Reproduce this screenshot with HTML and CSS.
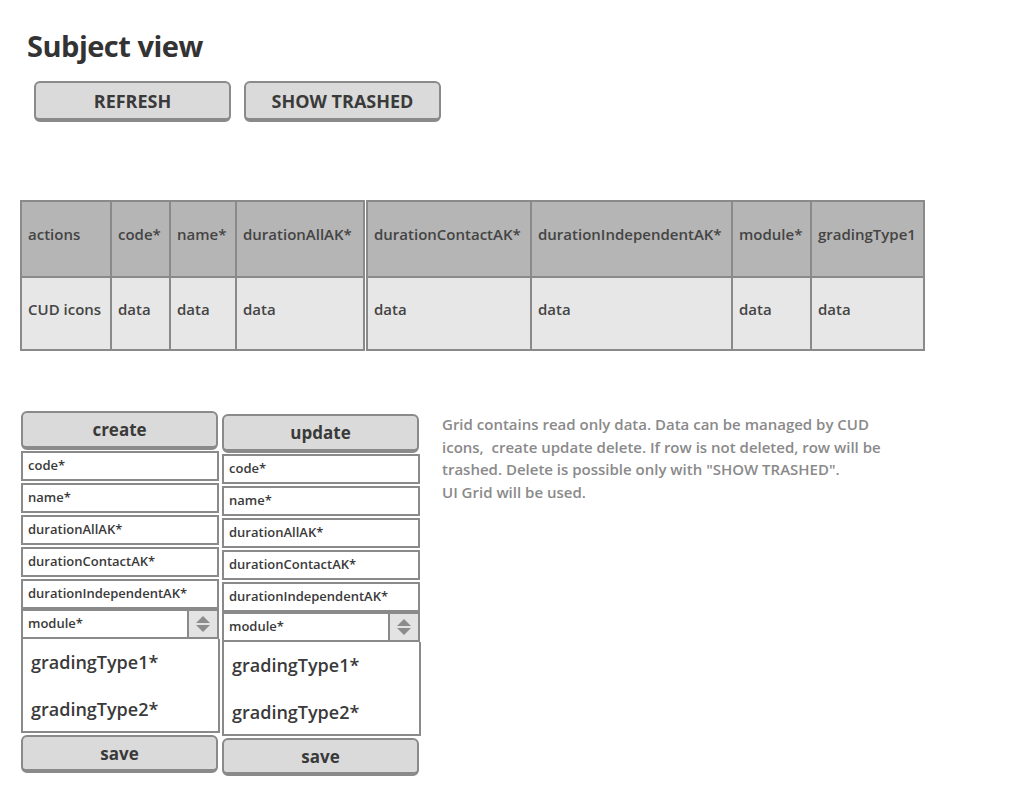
FILE: index.html
```html
<!DOCTYPE html>
<html lang="en">
<head>
    <meta charset="UTF-8">
    <title>Subject view</title>
    <link rel="stylesheet" href="styles.css">
</head>
<body>

    <h1 class="title">Subject view</h1>

    <div class="toolbar">
        <button class="btn btn-wide">REFRESH</button>
        <button class="btn btn-wide">SHOW TRASHED</button>
    </div>

    <div class="grid">
        <table class="grid-table grid-left">
            <tr class="head">
                <td class="c-actions">actions</td>
                <td class="c-code">code*</td>
                <td class="c-name">name*</td>
                <td class="c-all">durationAllAK*</td>
            </tr>
            <tr class="row">
                <td>CUD icons</td>
                <td>data</td>
                <td>data</td>
                <td>data</td>
            </tr>
        </table>
        <table class="grid-table grid-right">
            <tr class="head">
                <td class="c-contact">durationContactAK*</td>
                <td class="c-indep">durationIndependentAK*</td>
                <td class="c-module">module*</td>
                <td class="c-grading">gradingType1</td>
            </tr>
            <tr class="row">
                <td>data</td>
                <td>data</td>
                <td>data</td>
                <td>data</td>
            </tr>
        </table>
    </div>

    <div class="bottom">
        <!-- create form -->
        <div class="form">
            <button class="btn btn-form">create</button>
            <div class="field">code*</div>
            <div class="field">name*</div>
            <div class="field">durationAllAK*</div>
            <div class="field">durationContactAK*</div>
            <div class="field">durationIndependentAK*</div>
            <div class="select">
                <span class="select-text">module*</span>
                <span class="spinner">
                    <svg width="16" height="18" viewBox="0 0 16 18"><path d="M8 1 L15 8 L1 8 Z" fill="#8c8c8c"/><path d="M1 10 L15 10 L8 17 Z" fill="#8c8c8c"/></svg>
                </span>
            </div>
            <div class="list">
                <div class="list-item">gradingType1*</div>
                <div class="list-item">gradingType2*</div>
            </div>
            <button class="btn btn-form btn-save">save</button>
        </div>

        <!-- update form -->
        <div class="form form-update">
            <button class="btn btn-form">update</button>
            <div class="field">code*</div>
            <div class="field">name*</div>
            <div class="field">durationAllAK*</div>
            <div class="field">durationContactAK*</div>
            <div class="field">durationIndependentAK*</div>
            <div class="select">
                <span class="select-text">module*</span>
                <span class="spinner">
                    <svg width="16" height="18" viewBox="0 0 16 18"><path d="M8 1 L15 8 L1 8 Z" fill="#8c8c8c"/><path d="M1 10 L15 10 L8 17 Z" fill="#8c8c8c"/></svg>
                </span>
            </div>
            <div class="list">
                <div class="list-item">gradingType1*</div>
                <div class="list-item">gradingType2*</div>
            </div>
            <button class="btn btn-form btn-save">save</button>
        </div>

        <p class="note">Grid contains read only data. Data can be managed by CUD icons,&nbsp; create update delete. If row is not deleted, row will be trashed. Delete is possible only with "SHOW TRASHED".<br>UI Grid will be used.</p>
    </div>

</body>
</html>
```

FILE: styles.css
```css
body {
    margin: 0;
    padding: 0;
    background-color: #fff;
    font-family: "Open Sans", "Noto Sans", sans-serif;
    color: #3c3c3c;
}

.title {
    margin: 0;
    padding: 26px 0 0 27px;
    font-size: 29px;
    font-weight: 700;
    line-height: 40px;
    color: #333;
    letter-spacing: -0.5px;
}

.toolbar {
    display: flex;
    gap: 13px;
    margin: 15px 0 0 34px;
}

.btn {
    box-sizing: border-box;
    background-color: #dadada;
    border: 2px solid #8a8a8a;
    border-bottom-width: 4px;
    border-radius: 6px;
    font-family: "Open Sans", "Noto Sans", sans-serif;
    font-weight: 700;
    color: #3a3a3a;
    padding: 0;
    cursor: pointer;
}

.btn-wide {
    width: 197px;
    height: 41px;
    font-size: 18px;
}

.grid {
    display: flex;
    gap: 1px;
    margin: 78px 0 0 20px;
}

.grid-table {
    border-collapse: collapse;
    border: 2px solid #8a8a8a;
    table-layout: fixed;
    font-size: 15px;
    font-weight: 600;
    color: #444;
}

.grid-table td {
    border: 2px solid #8a8a8a;
    padding: 0 0 10px 6px;
    white-space: nowrap;
    overflow: hidden;
}

.head td {
    background-color: #b5b5b5;
    height: 64px;
}

.row td {
    background-color: #e7e7e7;
    height: 61px;
}

.c-actions { width: 82px; }
.c-code { width: 51px; }
.c-name { width: 58px; }
.c-all { width: 120px; }
.c-contact { width: 156px; }
.c-indep { width: 193px; }
.c-module { width: 71px; }
.c-grading { width: 105px; }

.bottom {
    display: flex;
    align-items: flex-start;
    margin: 60px 0 0 21px;
}

.form {
    display: flex;
    flex-direction: column;
    width: 198px;
}

.form-update {
    margin: 3px 0 0 3px;
}

.btn-form {
    width: 197px;
    height: 39px;
    font-size: 17px;
    margin-bottom: 1px;
}

.field {
    box-sizing: border-box;
    height: 30px;
    margin-bottom: 2px;
    border: 2px solid #8a8a8a;
    background-color: #fff;
    padding: 0 0 2px 5px;
    font-size: 13px;
    font-weight: 600;
    line-height: 24px;
    color: #3a3a3a;
    white-space: nowrap;
}

.select {
    box-sizing: border-box;
    display: flex;
    height: 30px;
    margin-top: -2px;
    border: 2px solid #8a8a8a;
    background-color: #fff;
    font-size: 13px;
    font-weight: 600;
    color: #3a3a3a;
}

.select-text {
    flex: 1;
    padding-left: 5px;
    line-height: 24px;
}

.spinner {
    width: 28px;
    border-left: 2px solid #8a8a8a;
    background-color: #e3e3e3;
    display: flex;
    align-items: center;
    justify-content: center;
}

.list {
    box-sizing: border-box;
    height: 94px;
    width: 199px;
    border: 2px solid #8a8a8a;
    border-top: none;
    background-color: #fff;
    padding: 0 0 0 8px;
}

.list-item {
    font-size: 18px;
    font-weight: 600;
    line-height: 47px;
    height: 47px;
    color: #3a3a3a;
}

.btn-save {
    margin-top: 2px;
    height: 38px;
}

.note {
    margin: 2px 0 0 22px;
    width: 445px;
    font-size: 15px;
    font-weight: 600;
    line-height: 22.5px;
    color: #8a8a8a;
}
```
